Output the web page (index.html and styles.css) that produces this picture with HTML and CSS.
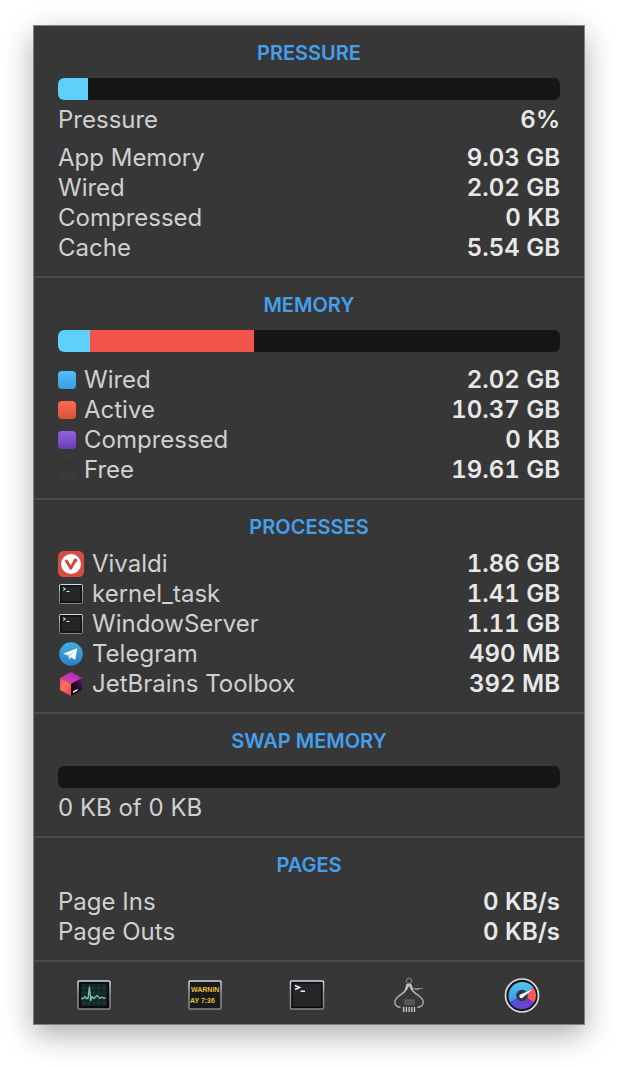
FILE: index.html
```
<!DOCTYPE html>
<html lang="en">
<head>
  <meta charset="UTF-8" />
  <meta name="viewport" content="width=device-width, initial-scale=1" />
  <title>Memory</title>
  <link rel="stylesheet" href="styles.css">
</head>
<body>
  <!-- shared gradients and the small terminal icon -->
  <svg class="defs" width="0" height="0" aria-hidden="true">
    <defs>
      <linearGradient id="frame" x1="0" y1="0" x2="0" y2="1">
        <stop offset="0" stop-color="#d3dbe6" /><stop offset=".5" stop-color="#8e9094" /><stop offset="1" stop-color="#858585" />
      </linearGradient>
      <linearGradient id="telegram" x1="0" y1="0" x2="0" y2="1">
        <stop offset="0" stop-color="#41aee6" /><stop offset="1" stop-color="#2b80bd" />
      </linearGradient>
      <linearGradient id="cubeTop" x1="0" y1="1" x2="1" y2="0">
        <stop offset="0" stop-color="#e8478a" /><stop offset=".5" stop-color="#c238b4" /><stop offset="1" stop-color="#8a2cb8" />
      </linearGradient>
      <linearGradient id="cubeLeft" x1="0" y1="0" x2="1" y2="1">
        <stop offset="0" stop-color="#e84a86" /><stop offset=".4" stop-color="#fb7550" /><stop offset="1" stop-color="#e83a80" />
      </linearGradient>
      <linearGradient id="cubeRight" x1="0" y1="1" x2="1" y2="0">
        <stop offset=".4" stop-color="#140612" /><stop offset="1" stop-color="#6a1285" />
      </linearGradient>
      <linearGradient id="caliper" x1="0" y1="0" x2="1" y2="0">
        <stop offset="0" stop-color="#9a9a9a" /><stop offset=".5" stop-color="#d0d0d0" /><stop offset="1" stop-color="#969696" />
      </linearGradient>
      <linearGradient id="dialBlue" x1="0" y1="0" x2="0" y2="1">
        <stop offset="0" stop-color="#55c8ee" /><stop offset="1" stop-color="#3b91e0" />
      </linearGradient>
      <linearGradient id="dialPurple" x1="0" y1="0" x2="1" y2="0">
        <stop offset="0" stop-color="#4d50dc" /><stop offset="1" stop-color="#7a3ccc" />
      </linearGradient>
      <symbol id="terminal" viewBox="0 0 26 26">
        <rect x="1.500" y="3.500" width="23" height="19" rx="1" fill="#1b1c1d" stroke="url(#frame)" />
        <rect x="3" y="5" width="20" height="16" fill="#242526" stroke="#0d0e0f" />
        <path d="M5 6.500l2.500 1.500L5 9.500M8.500 10.500H11.500" fill="none" stroke="#e0e0e0" />
      </symbol>
    </defs>
  </svg>

  <main class="panel">
    <section class="section">
      <h2>PRESSURE</h2>
      <div class="bar" role="img" aria-label="Pressure 6%">
        <div class="fill blue" style="width: 6%"></div>
      </div>
      <dl class="rows tight">
        <div class="row"><dt>Pressure</dt><dd>6%</dd></div>
      </dl>
      <dl class="rows details">
        <div class="row"><dt>App Memory</dt><dd>9.03 GB</dd></div>
        <div class="row"><dt>Wired</dt><dd>2.02 GB</dd></div>
        <div class="row"><dt>Compressed</dt><dd>0 KB</dd></div>
        <div class="row"><dt>Cache</dt><dd>5.54 GB</dd></div>
      </dl>
    </section>

    <section class="section">
      <h2>MEMORY</h2>
      <div class="bar" role="img" aria-label="Memory in use">
        <div class="fill blue" style="width: 6.4%"></div>
        <div class="fill red" style="width: 32.7%"></div>
      </div>
      <dl class="rows legend">
        <div class="row"><dt><span class="swatch wired"></span>Wired</dt><dd>2.02 GB</dd></div>
        <div class="row"><dt><span class="swatch active"></span>Active</dt><dd>10.37 GB</dd></div>
        <div class="row"><dt><span class="swatch compressed"></span>Compressed</dt><dd>0 KB</dd></div>
        <div class="row"><dt><span class="swatch free"></span>Free</dt><dd>19.61 GB</dd></div>
      </dl>
    </section>

    <section class="section">
      <h2>PROCESSES</h2>
      <dl class="rows list">
        <div class="row">
          <dt>
            <svg class="app" viewBox="0 0 26 26" aria-hidden="true">
              <rect width="26" height="26" rx="5.500" fill="#d94c42" />
              <circle cx="13" cy="13" r="10" fill="#fff" />
              <path d="M8.500 10L12.800 17.200L16.500 10.500" fill="none" stroke="#d0443c" stroke-width="2.800" stroke-linecap="round" stroke-linejoin="round" />
              <circle cx="17.300" cy="9.500" r="1.900" fill="#d0443c" />
            </svg>Vivaldi
          </dt>
          <dd>1.86 GB</dd>
        </div>
        <div class="row">
          <dt><svg class="app" aria-hidden="true"><use href="#terminal" /></svg>kernel_task</dt>
          <dd>1.41 GB</dd>
        </div>
        <div class="row">
          <dt><svg class="app" aria-hidden="true"><use href="#terminal" /></svg>WindowServer</dt>
          <dd>1.11 GB</dd>
        </div>
        <div class="row">
          <dt>
            <svg class="app" viewBox="0 0 26 26" aria-hidden="true">
              <circle cx="13" cy="13" r="11.800" fill="url(#telegram)" />
              <path d="M5 12.800L19.300 7.300L17.200 19L13.300 16.300L11.200 18.500L10.500 14.500Z" fill="#fff" />
              <path d="M10.500 14.500L16.500 9.700L12 15.500L11.200 18.500Z" fill="#b9d9ed" />
            </svg>Telegram
          </dt>
          <dd>490 MB</dd>
        </div>
        <div class="row">
          <dt>
            <svg class="app" viewBox="0 0 26 26" aria-hidden="true">
              <path d="M13 1L24 7L13 13L2 7Z" fill="url(#cubeTop)" />
              <path d="M2 7L13 13V25L2 19Z" fill="url(#cubeLeft)" />
              <path d="M24 7L13 13V25L24 19Z" fill="url(#cubeRight)" />
              <path d="M15 20.300L19.500 17.900V19.500L15 21.900Z" fill="#fff" />
            </svg>JetBrains Toolbox
          </dt>
          <dd>392 MB</dd>
        </div>
      </dl>
    </section>

    <section class="section">
      <h2>SWAP MEMORY</h2>
      <div class="bar" role="img" aria-label="No swap in use"></div>
      <p class="note">0 KB of 0 KB</p>
    </section>

    <section class="section">
      <h2>PAGES</h2>
      <dl class="rows list">
        <div class="row"><dt>Page Ins</dt><dd>0 KB/s</dd></div>
        <div class="row"><dt>Page Outs</dt><dd>0 KB/s</dd></div>
      </dl>
    </section>

    <nav class="tools" aria-label="Utilities">
      <button type="button" aria-label="Activity Monitor">
        <svg viewBox="0 0 36 36">
          <rect x="2" y="4" width="32" height="28" rx="1" fill="#0a0d10" stroke="url(#frame)" stroke-width="1.500" />
          <rect x="5" y="7" width="26" height="22" fill="#122422" />
          <path d="M8 7V29M13 7V29M18 7V29M23 7V29M28 7V29M5 11H31M5 16H31M5 21H31M5 26H31" stroke="#25423d" stroke-width=".7" />
          <path d="M5 21.500H7.500L9 19.500L10.500 21.500H12L13.500 9.500L14.700 24L16 19.500L18 21.500L21 18.500L24 21.500L26 20L28 21.500L29.500 20.500" fill="none" stroke="#79bfac" stroke-width="1.300" />
        </svg>
      </button>
      <button type="button" aria-label="Console">
        <svg viewBox="0 0 36 36">
          <rect x="2" y="4" width="32" height="28" rx="1" fill="#17191b" stroke="url(#frame)" stroke-width="1.500" />
          <text class="console" x="4" y="15">WARNIN</text>
          <text class="console" x="3" y="26">AY 7:36</text>
        </svg>
      </button>
      <button type="button" aria-label="Terminal">
        <svg viewBox="0 0 36 36">
          <rect x="1.500" y="4" width="33" height="28" rx="1" fill="#090a0b" stroke="url(#frame)" stroke-width="1.500" />
          <rect x="3.500" y="6" width="29" height="24" fill="#252627" stroke="#0b0c0d" />
          <path d="M6 8.500L10.700 10.500L6 12.500M11.500 14.300H16" fill="none" stroke="#f1f1f1" stroke-width="1.400" />
        </svg>
      </button>
      <button type="button" aria-label="System Information">
        <svg viewBox="0 0 36 36">
          <circle cx="18" cy="3.800" r="2.700" fill="none" stroke="#8d8d8d" />
          <path d="M16.500 7L14.500 13C12.500 17.500 3.800 19.500 3.800 25C3.800 28 6 30 9.500 30.500M19.500 7L21.500 13C23.500 17.500 32.200 19.500 32.200 25C32.200 28 30 30 26.500 30.500" fill="none" stroke="url(#caliper)" stroke-width="1.700" />
          <path d="M13.800 14L16.200 7.500L18 6.500L19.800 7.500L22.200 14L20 13L18 9L16 13Z" fill="#bcbcbc" />
          <path d="M22 11.500H32M24 12.500H28" stroke="#898989" />
          <rect x="13" y="22" width="11" height="6.500" fill="#505050" />
          <path d="M14 23.500H23M14 26.500H23" stroke="#656565" stroke-dasharray="1.500 1" />
          <path d="M12.700 30V35M15.400 30V35M18.100 30V35M20.800 30V35M23.500 30V35" stroke="#d1d1d1" stroke-width="1.300" />
        </svg>
      </button>
      <button type="button" aria-label="iStat Menus">
        <svg viewBox="0 0 36 36">
          <circle cx="18" cy="18.500" r="16.500" fill="#15171b" stroke="#dedede" stroke-width="1.700" />
          <path d="M18 18.500L6 25.500A14 14 0 0 1 29.500 10.500Z" fill="url(#dialBlue)" />
          <path d="M18 18.500L29.500 10.500A14 14 0 0 1 30 25.500Z" fill="#ef5960" />
          <path d="M18 18.500L30 25.500A14 14 0 0 1 6 25.500Z" fill="url(#dialPurple)" />
          <circle cx="18" cy="18.500" r="5.800" fill="#303746" />
          <path d="M17 17.200L29 12L19 20.300A2 2 0 1 1 17 17.200Z" fill="#fff" />
        </svg>
      </button>
    </nav>
  </main>
</body>
</html>
```
FILE: styles.css
```
* { box-sizing: border-box; }
body {
  margin: 0;
  padding: 25px 33px 41px;
  background: #fff;
  font-family: Inter, "Liberation Sans", sans-serif;
  font-size: 24px;
  line-height: 30px;
  color: #d0d0d0;
}
h2, dl, dd, p { margin: 0; }
.defs { position: absolute; }
.panel {
  background: #373737;
  border: 1px solid #808080;
  box-shadow: 0 10px 28px rgba(0,0,0,0.32);
}
.section {
  padding: 12px 24px 13px;
  border-bottom: 2px solid #4a4a4a;
}
h2 {
  font-size: 20px;
  font-weight: 600;
  text-align: center;
  color: #459fec;
}
.bar {
  display: flex;
  height: 22px;
  margin-top: 10px;
  border-radius: 6px;
  overflow: hidden;
  background: #161616;
}
.fill.blue { background: #5fcffc; }
.fill.red { background: #f2544a; }
.tight, .note { margin-top: 5px; }
.details { margin-top: 8px; }
.legend { margin-top: 13px; }
.list { margin-top: 7px; }
.row {
  display: flex;
  justify-content: space-between;
}
dt {
  display: flex;
  align-items: center;
}
dd {
  font-weight: 600;
  font-variant-numeric: tabular-nums;
  color: #e8e8e8;
}
.swatch {
  width: 18px; height: 18px;
  margin-right: 8px;
  border-radius: 4px;
}
.wired { background: linear-gradient(#50c0fc, #3a9de2); }
.active { background: linear-gradient(#fb6b50, #dc5139); }
.compressed { background: linear-gradient(#9263df, #6940b3); }
.free { background: linear-gradient(#343434, #3b3b3b); }
.app {
  width: 26px; height: 26px;
  margin-right: 8px;
}
.tools {
  display: grid;
  grid-template-columns: 60fr 51fr 51fr 51fr 62fr;
  justify-items: center;
  padding: 15px 0 11px;
}
.tools button {
  padding: 0;
  border: none;
  background: none;
  cursor: pointer;
}
.tools svg {
  display: block;
  width: 36px; height: 36px;
}
.console {
  font: bold 7px "Liberation Sans", sans-serif;
  fill: #e9bf35;
}
```
